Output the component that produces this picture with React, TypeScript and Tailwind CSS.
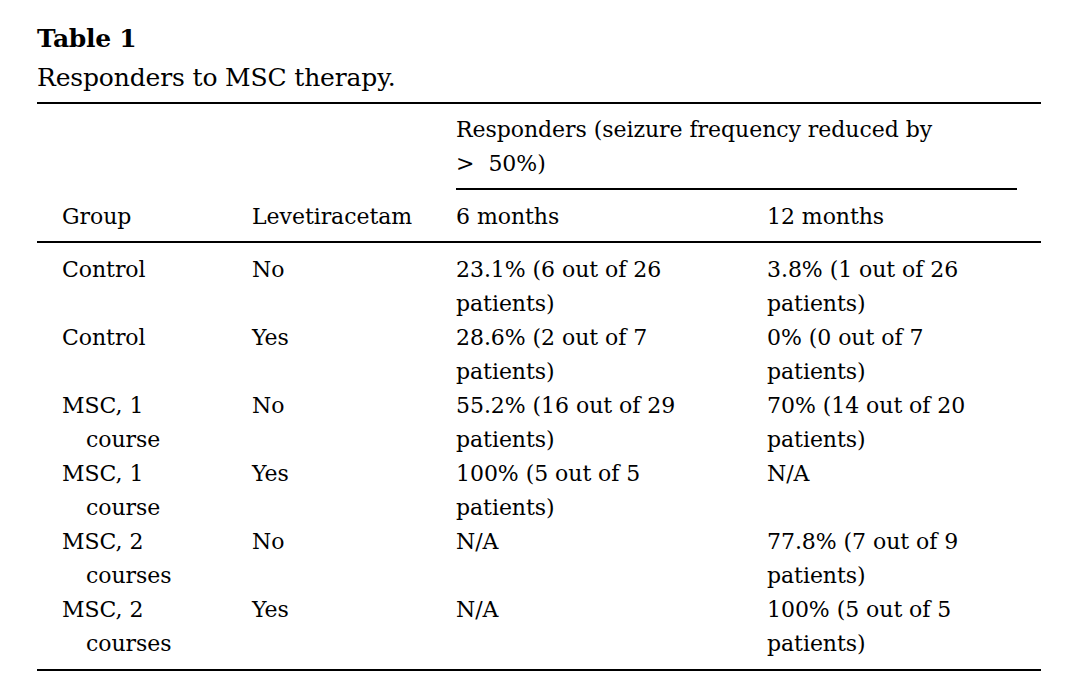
import React from 'react';

type Row = {
  group: string[];
  lev: string;
  six: string[];
  twelve: string[];
};

const ROWS: Row[] = [
  { group: ['Control'], lev: 'No', six: ['23.1% (6 out of 26', 'patients)'], twelve: ['3.8% (1 out of 26', 'patients)'] },
  { group: ['Control'], lev: 'Yes', six: ['28.6% (2 out of 7', 'patients)'], twelve: ['0% (0 out of 7', 'patients)'] },
  { group: ['MSC, 1', 'course'], lev: 'No', six: ['55.2% (16 out of 29', 'patients)'], twelve: ['70% (14 out of 20', 'patients)'] },
  { group: ['MSC, 1', 'course'], lev: 'Yes', six: ['100% (5 out of 5', 'patients)'], twelve: ['N/A'] },
  { group: ['MSC, 2', 'courses'], lev: 'No', six: ['N/A'], twelve: ['77.8% (7 out of 9', 'patients)'] },
  { group: ['MSC, 2', 'courses'], lev: 'Yes', six: ['N/A'], twelve: ['100% (5 out of 5', 'patients)'] },
];

const Lines: React.FC<{ lines: string[]; hang?: boolean }> = ({ lines, hang }) => (
  <div className="min-h-[68px]">
    {lines.map((l, i) => (
      <div key={i} className={i > 0 && hang ? 'pl-6' : ''}>
        {l}
      </div>
    ))}
  </div>
);

export default function App() {
  return (
    <div className="min-h-[697px] w-[1067px] bg-white px-[37px] text-black font-['DejaVu_Serif',serif]">
      {/* caption */}
      <div className="pt-[19px] pb-[5px]">
        <div className="text-[25px] leading-[39px] font-bold tracking-[-0.3px]">Table 1</div>
        <div className="text-[25px] leading-[39px] tracking-[-0.15px]">Responders to MSC therapy.</div>
      </div>

      <div className="w-[1004px] text-[22px] leading-[34px] tracking-[-0.05px]">
        <div className="h-[2px] bg-black" />

        {/* header */}
        <div className="grid grid-cols-[215px_204px_311px_274px]">
          <div className="col-start-3 col-span-2 mr-[24px] pt-[9px] pb-[7px] border-b-2 border-black">
            <div>Responders (seizure frequency reduced by</div>
            <div>
              <span className="mr-[14px]">&gt;</span>50%)
            </div>
          </div>
          <div className="col-start-1 pl-[25px] pt-[10px] pb-[7px]">Group</div>
          <div className="pt-[10px] pb-[7px]">Levetiracetam</div>
          <div className="pt-[10px] pb-[7px]">6 months</div>
          <div className="pt-[10px] pb-[7px]">12 months</div>
        </div>

        <div className="h-[2px] bg-black" />

        {/* body */}
        <div className="grid grid-cols-[215px_204px_311px_274px] pt-[10px] pb-[8px]">
          {ROWS.map((r, i) => (
            <React.Fragment key={i}>
              <div className="pl-[25px]">
                <Lines lines={r.group} hang />
              </div>
              <div>
                <Lines lines={[r.lev]} />
              </div>
              <div>
                <Lines lines={r.six} />
              </div>
              <div>
                <Lines lines={r.twelve} />
              </div>
            </React.Fragment>
          ))}
        </div>

        <div className="h-[2px] bg-black" />
      </div>
    </div>
  );
}
